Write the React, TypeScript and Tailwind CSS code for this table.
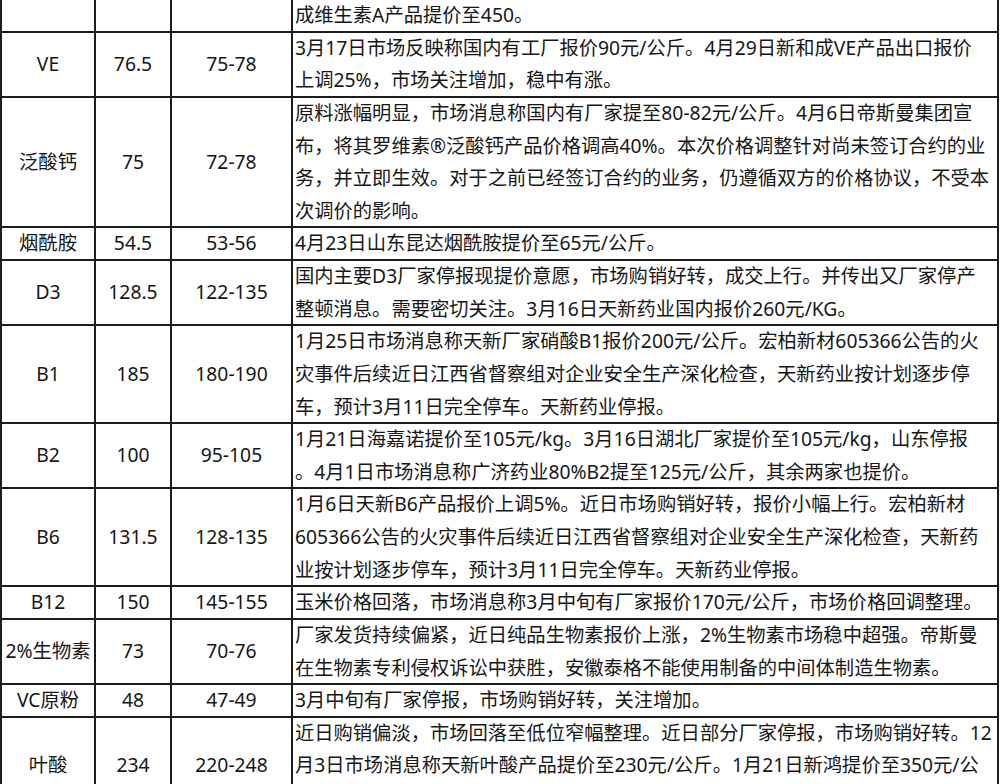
import React from "react";

type Row = {
  name: string;
  avg: string;
  range: string;
  lines: string[];
};

const rows: Row[] = [
  { name: "", avg: "", range: "", lines: ["成维生素A产品提价至450。"] },
  {
    name: "VE",
    avg: "76.5",
    range: "75-78",
    lines: [
      "3月17日市场反映称国内有工厂报价90元/公斤。4月29日新和成VE产品出口报价",
      "上调25%，市场关注增加，稳中有涨。",
    ],
  },
  {
    name: "泛酸钙",
    avg: "75",
    range: "72-78",
    lines: [
      "原料涨幅明显，市场消息称国内有厂家提至80-82元/公斤。4月6日帝斯曼集团宣",
      "布，将其罗维素®泛酸钙产品价格调高40%。本次价格调整针对尚未签订合约的业",
      "务，并立即生效。对于之前已经签订合约的业务，仍遵循双方的价格协议，不受本",
      "次调价的影响。",
    ],
  },
  {
    name: "烟酰胺",
    avg: "54.5",
    range: "53-56",
    lines: ["4月23日山东昆达烟酰胺提价至65元/公斤。"],
  },
  {
    name: "D3",
    avg: "128.5",
    range: "122-135",
    lines: [
      "国内主要D3厂家停报现提价意愿，市场购销好转，成交上行。并传出又厂家停产",
      "整顿消息。需要密切关注。3月16日天新药业国内报价260元/KG。",
    ],
  },
  {
    name: "B1",
    avg: "185",
    range: "180-190",
    lines: [
      "1月25日市场消息称天新厂家硝酸B1报价200元/公斤。宏柏新材605366公告的火",
      "灾事件后续近日江西省督察组对企业安全生产深化检查，天新药业按计划逐步停",
      "车，预计3月11日完全停车。天新药业停报。",
    ],
  },
  {
    name: "B2",
    avg: "100",
    range: "95-105",
    lines: [
      "1月21日海嘉诺提价至105元/kg。3月16日湖北厂家提价至105元/kg，山东停报",
      "。4月1日市场消息称广济药业80%B2提至125元/公斤，其余两家也提价。",
    ],
  },
  {
    name: "B6",
    avg: "131.5",
    range: "128-135",
    lines: [
      "1月6日天新B6产品报价上调5%。近日市场购销好转，报价小幅上行。宏柏新材",
      "605366公告的火灾事件后续近日江西省督察组对企业安全生产深化检查，天新药",
      "业按计划逐步停车，预计3月11日完全停车。天新药业停报。",
    ],
  },
  {
    name: "B12",
    avg: "150",
    range: "145-155",
    lines: ["玉米价格回落，市场消息称3月中旬有厂家报价170元/公斤，市场价格回调整理。"],
  },
  {
    name: "2%生物素",
    avg: "73",
    range: "70-76",
    lines: [
      "厂家发货持续偏紧，近日纯品生物素报价上涨，2%生物素市场稳中超强。帝斯曼",
      "在生物素专利侵权诉讼中获胜，安徽泰格不能使用制备的中间体制造生物素。",
    ],
  },
  {
    name: "VC原粉",
    avg: "48",
    range: "47-49",
    lines: ["3月中旬有厂家停报，市场购销好转，关注增加。"],
  },
  {
    name: "叶酸",
    avg: "234",
    range: "220-248",
    lines: [
      "近日购销偏淡，市场回落至低位窄幅整理。近日部分厂家停报，市场购销好转。12",
      "月3日市场消息称天新叶酸产品提价至230元/公斤。1月21日新鸿提价至350元/公",
      "斤。",
    ],
  },
];

const cell = "shadow-[inset_0_0_0_1px_#1c1c1c]";

export default function App() {
  return (
    <div
      className="h-[784px] w-[1000px] overflow-hidden bg-white text-[#161616]"
      style={{ fontFamily: '"Noto Sans", "Noto Sans CJK SC", sans-serif' }}
    >
      <div className="-mt-px w-[999px] border-x border-[#1c1c1c] text-[19.3px] leading-[32.62px]">
        {rows.map((r, i) => (
          <div key={i} className="grid grid-cols-[94px_76px_121px_1fr]">
            <div className={`${cell} flex items-center justify-center whitespace-nowrap`}>{r.name}</div>
            <div className={`${cell} flex items-center justify-center`}>{r.avg}</div>
            <div className={`${cell} flex items-center justify-center`}>{r.range}</div>
            <div className={`${cell} pl-[3px]`}>
              {r.lines.map((l, j) => (
                <div key={j} className="whitespace-nowrap">
                  {l}
                </div>
              ))}
            </div>
          </div>
        ))}
      </div>
    </div>
  );
}
